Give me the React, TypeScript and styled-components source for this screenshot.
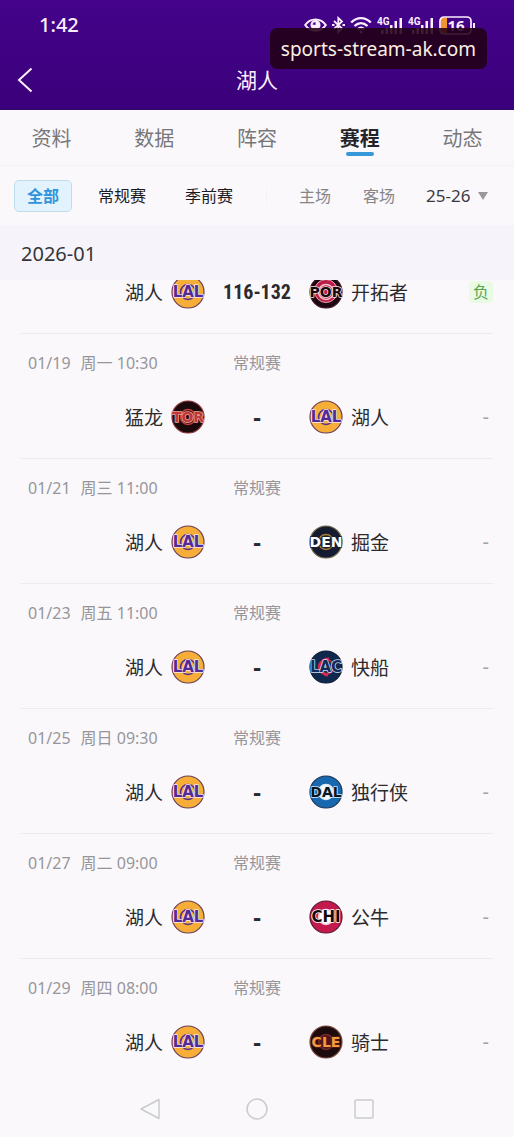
import React, { useState } from 'react';
import styled, { createGlobalStyle } from 'styled-components';

const GlobalStyle = createGlobalStyle`
  *, *::before, *::after { box-sizing: border-box; }
  body {
    margin: 0;
    background: #fbf8fc;
    color: #2b2b2e;
    font-family: "Noto Sans", "Noto Sans CJK SC", sans-serif;
    font-size: 16px;
  }
  button, select { font: inherit; color: inherit; border: 0; background: none; padding: 0; margin: 0; cursor: pointer; }
`;

const Page = styled.div`
  display: flex;
  flex-direction: column;
  min-height: 100vh;
  background: #fbf8fc;
`;

const Header = styled.header`
  position: relative;
  background: linear-gradient(#44038a, #3b007b);
  color: #fdeeff;
  border-bottom: 1px solid #2e0a62;
`;

const StatusBar = styled.div`
  display: flex;
  align-items: center;
  justify-content: space-between;
  height: 50px;
  padding: 0 38px 0 39px;
`;

const Time = styled.time`
  font-size: 20px;
  font-weight: 500;
  line-height: 24px;
`;

const StatusIcons = styled.div`
  display: flex;
  align-items: center;
  gap: 5px;
  svg { display: block; }
`;

const DomainTag = styled.div`
  position: absolute;
  top: 28px;
  right: 27px;
  padding: 0 11px;
  border-radius: 7px;
  background: rgba(34, 0, 22, 0.88);
  color: #faf0e0;
  font-size: 19px;
  line-height: 43px;
  height: 41px;
`;

const TitleBar = styled.div`
  display: grid;
  grid-template-columns: 40px 1fr 40px;
  align-items: center;
  height: 59px;
  padding: 0 12px;
`;

const BackButton = styled.button`
  display: flex;
  height: 40px;
  align-items: center;
  padding-left: 5px;
`;

const Title = styled.h1`
  margin: 0;
  text-align: center;
  font-size: 21px;
  font-weight: 400;
  line-height: 28px;
`;

const Tabs = styled.nav`
  display: grid;
  grid-template-columns: repeat(5, 1fr);
  height: 56px;
  border-bottom: 1px solid #f3f1f5;
`;

const Tab = styled.button<{ $active: boolean }>`
  display: flex;
  flex-direction: column;
  align-items: center;
  padding-top: 16px;
  font-size: 20px;
  line-height: 26px;
  font-weight: ${p => (p.$active ? 700 : 400)};
  color: ${p => (p.$active ? '#242428' : '#77777a')};
  &::after {
    content: "";
    width: 28px;
    height: 4px;
    border-radius: 2px;
    background: ${p => (p.$active ? '#3798d8' : 'transparent')};
  }
`;

const Filters = styled.div`
  display: flex;
  align-items: center;
  justify-content: space-between;
  height: 59px;
  padding: 0 18px 0 14px;
`;

const FilterGroup = styled.div<{ $gap: number }>`
  display: flex;
  align-items: center;
  gap: ${p => p.$gap}px;
`;

const FilterButton = styled.button<{ $active?: boolean; $muted?: boolean }>`
  height: 32px;
  padding: 0 12px;
  border: 1px solid ${p => (p.$active ? '#bfdceb' : 'transparent')};
  border-radius: 5px;
  background: ${p => (p.$active ? '#e2f3fd' : 'transparent')};
  color: ${p => (p.$active ? '#2f93dc' : p.$muted ? '#858588' : '#1c1c1f')};
  font-weight: ${p => (p.$active ? 700 : 400)};
  line-height: 30px;
  white-space: nowrap;
`;

const FilterDivider = styled.span`
  width: 1px;
  height: 16px;
  background: #f5f2f7;
`;

const SeasonPicker = styled.div`
  display: flex;
  align-items: center;
  position: relative;
  svg { position: absolute; right: 8px; pointer-events: none; }
`;

const SeasonSelect = styled.select`
  appearance: none;
  height: 32px;
  width: 82px;
  padding: 0 22px 0 12px;
  font-size: 17px;
  color: #3a3a3e;
`;

const MonthHeading = styled.h2`
  margin: 0;
  height: 55px;
  padding: 0 21px;
  background: #f6f4fa;
  color: #36363a;
  font-size: 20px;
  font-weight: 400;
  line-height: 57px;
`;

const GameList = styled.ul`
  list-style: none;
  margin: 0;
  padding: 0 21px;
`;

const Game = styled.li<{ $clipped?: boolean }>`
  display: flex;
  flex-direction: column;
  justify-content: flex-end;
  height: ${p => (p.$clipped ? 54 : 125)}px;
  padding-bottom: 24px;
  border-bottom: 1px solid #eeebef;
  overflow: hidden;
  &:last-child { border-color: transparent; }
`;

const GameMeta = styled.div`
  display: grid;
  grid-template-columns: 1fr auto 1fr;
  flex: 1;
  padding: 17px 7px 0;
  color: #96969a;
  line-height: 24px;
`;

const DateTime = styled.div`
  display: flex;
  gap: 10px;
`;

const Matchup = styled.div`
  display: grid;
  grid-template-columns: 1fr 104px 1fr;
  align-items: center;
  flex: none;
  height: 34px;
`;

const Side = styled.div<{ $home?: boolean }>`
  display: flex;
  align-items: center;
  justify-content: ${p => (p.$home ? 'flex-end' : 'flex-start')};
  gap: 8px;
  svg { flex: none; display: block; }
`;

const TeamName = styled.span`
  padding-top: 2px;
  font-size: 19px;
  line-height: 28px;
`;

const Score = styled.strong<{ $final: boolean }>`
  text-align: center;
  font-family: ${p => (p.$final ? '"Liberation Sans Narrow", "Roboto Condensed", Roboto, sans-serif' : '"Noto Sans", sans-serif')};
  font-size: ${p => (p.$final ? 20 : 24)}px;
  font-weight: 700;
  line-height: 28px;
`;

const Pending = styled.span`
  margin-left: auto;
  padding-right: 4px;
  color: #a5a5a9;
  font-size: 20px;
  line-height: 20px;
`;

const LossBadge = styled.span`
  margin-left: auto;
  width: 24px;
  text-align: center;
  border-radius: 4px;
  background: #e9fae5;
  color: #58a550;
  line-height: 22px;
`;

const SystemNav = styled.nav`
  display: flex;
  justify-content: center;
  align-items: center;
  gap: 85px;
  flex: 1;
  min-height: 53px;
  padding-bottom: 3px;
  button { display: flex; }
`;

interface LogoStyle {
  ball: string;
  rim: string;
  core: string;
  line: string;
  text: string;
  outline: string;
  size: number;
}

const LOGOS: Record<string, LogoStyle> = {
  LAL: { ball: '#f6ae38', rim: '#6c4053', core: '#f6ae38', line: '#56308e', text: '#552a92', outline: '#f4e8f4', size: 15 },
  POR: { ball: '#1d0711', rim: '#3a1220', core: '#c41c48', line: '#efc5cf', text: '#16080c', outline: '#f4dfe4', size: 14 },
  TOR: { ball: '#1c090c', rim: '#8a3034', core: '#260c10', line: '#c63d3d', text: '#bd3838', outline: '#f0a69d', size: 14 },
  DEN: { ball: '#151b31', rim: '#6c6844', core: '#26243a', line: '#a67c36', text: '#ffffff', outline: '#1a1b2c', size: 14 },
  LAC: { ball: '#10284d', rim: '#0c1934', core: '#18284f', line: '#ca274c', text: '#142a59', outline: '#c9dcec', size: 15 },
  DAL: { ball: '#1768ae', rim: '#183557', core: '#ffffff', line: '#d9ecf6', text: '#0b1420', outline: '#d4e9f5', size: 14 },
  CHI: { ball: '#c3194c', rim: '#5d1630', core: '#ffffff', line: '#f6cbd6', text: '#140a0e', outline: '#ffffff', size: 15 },
  CLE: { ball: '#1c0a0d', rim: '#79453a', core: '#4c151c', line: '#722c2a', text: '#f39a3c', outline: '#5d1a1b', size: 14 },
};

function TeamLogo({ code }: { code: string }) {
  const c = LOGOS[code];
  return (
    <svg width="34" height="34" viewBox="0 0 34 34" role="img" aria-label={code}>
      <circle cx="17" cy="17" r="16" fill={c.ball} stroke={c.rim} strokeWidth="1.2" />
      {code === 'POR' && <circle cx="17" cy="16" r="11.5" fill="#bf1d47" stroke="#e5a4b3" strokeWidth="1" />}
      <circle cx="17" cy="17" r="7.5" fill={c.core} stroke={c.line} strokeWidth="1.6" />
      {code === 'LAC' && <path d="M20 9 A8 8 0 1 0 19 25" fill="none" stroke="#d42a4e" strokeWidth="3" />}
      <text
        x="17"
        y="22"
        textAnchor="middle"
        fontFamily="DejaVu Sans, sans-serif"
        fontSize={c.size}
        fontWeight="700"
        fill={c.text}
        stroke={c.outline}
        strokeWidth="1.6"
        strokeLinejoin="round"
        paintOrder="stroke"
      >
        {code}
      </text>
    </svg>
  );
}

function EyeIcon() {
  return (
    <svg width="23" height="18" viewBox="0 0 23 18" fill="none" stroke="currentColor" strokeWidth="2">
      <path d="M1.2 9 C6 1.5 17 1.5 21.8 9 C17 16.5 6 16.5 1.2 9Z" />
      <circle cx="11.5" cy="9" r="5" fill="currentColor" stroke="none" />
      <path d="M8.5 8.5 A3 3 0 0 1 11.5 6 V9Z" fill="#42028a" stroke="none" />
    </svg>
  );
}

function BluetoothIcon() {
  return (
    <svg width="13" height="18" viewBox="0 0 13 18" fill="none" stroke="currentColor" strokeWidth="1.8">
      <path d="M2 5 L10 12.5 L6.3 16 V2 L10 5.5 L2 13" />
      <path d="M0 9h2.5M10.5 9H13" strokeWidth="2" />
    </svg>
  );
}

function WifiIcon() {
  return (
    <svg width="22" height="18" viewBox="0 0 22 18" fill="none" stroke="currentColor" strokeWidth="2.4">
      <path d="M1.2 6.5 C7 0.7 15 0.7 20.8 6.5M4.5 10 C8.5 6.2 13.5 6.2 17.5 10M7.7 13.3 C9.7 11.5 12.3 11.5 14.3 13.3" />
      <circle cx="11" cy="16" r="1.5" fill="currentColor" stroke="none" />
    </svg>
  );
}

function SignalIcon() {
  return (
    <svg width="26" height="18" viewBox="0 0 26 18" fill="currentColor">
      <text x="0" y="9" fontFamily="Roboto, sans-serif" fontSize="10" fontWeight="700">4G</text>
      <path d="M4 14h2.5v4H4zM8.5 12H11v6H8.5zM13 9h2.5v9H13zM17.5 5H20v13h-2.5zM22.5 2H25v16h-2.5z" />
    </svg>
  );
}

function BatteryIcon() {
  return (
    <svg width="37" height="19" viewBox="0 0 37 19" fill="none">
      <path d="M5 1.5h3v16H5a3.5 3.5 0 0 1-3.5-3.5V5A3.5 3.5 0 0 1 5 1.5z" fill="#f3952d" />
      <rect x="1" y="1" width="31" height="17" rx="4" stroke="currentColor" strokeWidth="1.7" />
      <path d="M35 7v5" stroke="currentColor" strokeWidth="2" />
      <text x="17" y="15" textAnchor="middle" fill="currentColor" fontFamily="Noto Sans, sans-serif" fontSize="15" fontWeight="700">16</text>
    </svg>
  );
}

const TABS = ['资料', '数据', '阵容', '赛程', '动态'];
const TYPES = ['全部', '常规赛', '季前赛'];
const VENUES = ['主场', '客场'];

interface GameData {
  date?: string;
  day?: string;
  time?: string;
  home: [string, string];
  away: [string, string];
  score?: string;
}

const LAKERS: [string, string] = ['湖人', 'LAL'];

const GAMES: GameData[] = [
  { home: LAKERS, away: ['开拓者', 'POR'], score: '116-132' },
  { date: '01/19', day: '周一', time: '10:30', home: ['猛龙', 'TOR'], away: LAKERS },
  { date: '01/21', day: '周三', time: '11:00', home: LAKERS, away: ['掘金', 'DEN'] },
  { date: '01/23', day: '周五', time: '11:00', home: LAKERS, away: ['快船', 'LAC'] },
  { date: '01/25', day: '周日', time: '09:30', home: LAKERS, away: ['独行侠', 'DAL'] },
  { date: '01/27', day: '周二', time: '09:00', home: LAKERS, away: ['公牛', 'CHI'] },
  { date: '01/29', day: '周四', time: '08:00', home: LAKERS, away: ['骑士', 'CLE'] },
];

function GameRow({ game }: { game: GameData }) {
  return (
    <Game $clipped={!game.date}>
      {game.date && (
        <GameMeta>
          <DateTime>
            <span>{game.date}</span>
            <span>{game.day} {game.time}</span>
          </DateTime>
          <span>常规赛</span>
        </GameMeta>
      )}
      <Matchup>
        <Side $home>
          <TeamName>{game.home[0]}</TeamName>
          <TeamLogo code={game.home[1]} />
        </Side>
        <Score $final={!!game.score}>{game.score ?? '-'}</Score>
        <Side>
          <TeamLogo code={game.away[1]} />
          <TeamName>{game.away[0]}</TeamName>
          {game.score ? <LossBadge>负</LossBadge> : <Pending>-</Pending>}
        </Side>
      </Matchup>
    </Game>
  );
}

export default function App() {
  const [tab, setTab] = useState('赛程');
  const [type, setType] = useState('全部');

  return (
    <Page>
      <GlobalStyle />
      <Header>
        <StatusBar>
          <Time>1:42</Time>
          <StatusIcons>
            <EyeIcon />
            <BluetoothIcon />
            <WifiIcon />
            <SignalIcon />
            <SignalIcon />
            <BatteryIcon />
          </StatusIcons>
        </StatusBar>
        <TitleBar>
          <BackButton aria-label="返回">
            <svg width="16" height="26" viewBox="0 0 16 26" fill="none" stroke="currentColor" strokeWidth="2">
              <path d="M14.5 1.5 L2 13 L14.5 24.5" />
            </svg>
          </BackButton>
          <Title>湖人</Title>
        </TitleBar>
        <DomainTag>sports-stream-ak.com</DomainTag>
      </Header>
      <Tabs>
        {TABS.map(t => (
          <Tab key={t} $active={t === tab} onClick={() => setTab(t)}>{t}</Tab>
        ))}
      </Tabs>
      <Filters>
        <FilterGroup $gap={13}>
          {TYPES.map(t => (
            <FilterButton key={t} $active={t === type} onClick={() => setType(t)}>{t}</FilterButton>
          ))}
        </FilterGroup>
        <FilterDivider />
        <FilterGroup $gap={6}>
          {VENUES.map(v => <FilterButton key={v} $muted>{v}</FilterButton>)}
          <SeasonPicker>
            <SeasonSelect aria-label="赛季" defaultValue="25-26">
              <option>25-26</option>
            </SeasonSelect>
            <svg width="10" height="8" viewBox="0 0 10 8"><path d="M0 0h10L5 8z" fill="#99999c" /></svg>
          </SeasonPicker>
        </FilterGroup>
      </Filters>
      <main>
        <MonthHeading>2026-01</MonthHeading>
        <GameList>
          {GAMES.map((g, i) => <GameRow key={i} game={g} />)}
        </GameList>
      </main>
      <SystemNav>
        <button aria-label="后退">
          <svg width="22" height="22" viewBox="0 0 22 22" fill="none" stroke="#c9cdca" strokeWidth="1.5" strokeLinejoin="round">
            <path d="M20 1.5v19L2 11z" />
          </svg>
        </button>
        <button aria-label="主页">
          <svg width="22" height="22" viewBox="0 0 22 22" fill="none" stroke="#c9cdca" strokeWidth="1.5">
            <circle cx="11" cy="11" r="10" />
          </svg>
        </button>
        <button aria-label="最近任务">
          <svg width="22" height="22" viewBox="0 0 22 22" fill="none" stroke="#c9cdca" strokeWidth="1.5">
            <rect x="2" y="2" width="18" height="18" rx="1" />
          </svg>
        </button>
      </SystemNav>
    </Page>
  );
}
